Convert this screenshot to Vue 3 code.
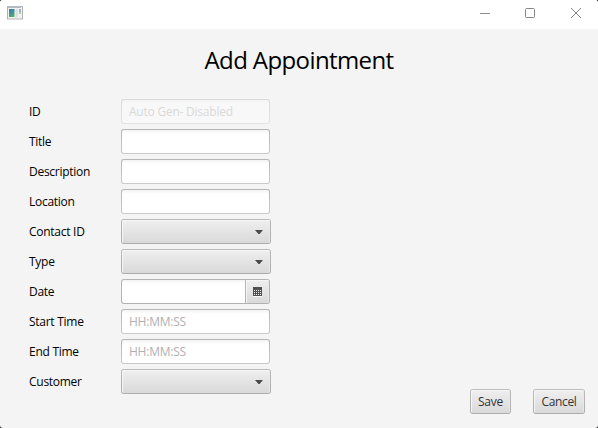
<script setup>
const rows = [
  { label: 'ID', kind: 'text', placeholder: 'Auto Gen- Disabled', disabled: true },
  { label: 'Title', kind: 'text' },
  { label: 'Description', kind: 'text' },
  { label: 'Location', kind: 'text' },
  { label: 'Contact ID', kind: 'combo' },
  { label: 'Type', kind: 'combo' },
  { label: 'Date', kind: 'date' },
  { label: 'Start Time', kind: 'text', placeholder: 'HH:MM:SS' },
  { label: 'End Time', kind: 'text', placeholder: 'HH:MM:SS' },
  { label: 'Customer', kind: 'combo' }
]
const cols = [0, 1, 2, 3]
const lines = [0, 1, 2]
</script>

<template>
  <div class="backdrop">
    <div class="window">
      <header class="titlebar">
        <svg class="app-icon" width="16" height="14" viewBox="0 0 16 14">
          <defs>
            <linearGradient id="pane" x1="0" y1="0" x2="0.4" y2="1">
              <stop offset="0" stop-color="#3f76b5" />
              <stop offset="0.5" stop-color="#3f8f9a" />
              <stop offset="1" stop-color="#55aa6c" />
            </linearGradient>
          </defs>
          <rect x="0.5" y="0.5" width="15" height="12.5" fill="#f2f2f2" stroke="#b0b3b6" />
          <rect x="1" y="0" width="13" height="2" fill="#b4bac0" />
          <rect x="2" y="3" width="5.5" height="8" fill="url(#pane)" />
          <rect x="8.5" y="3" width="2.5" height="8" fill="#dedede" />
          <rect x="12" y="3" width="2" height="3" fill="#8fb8d0" />
          <rect x="12" y="6" width="2" height="2" fill="#a9d3a5" />
        </svg>
        <svg class="controls" width="102" height="12" viewBox="0 0 102 12">
          <path d="M0 6.5H10" stroke="#8b8b8b" fill="none" />
          <rect x="45.5" y="1.5" width="9" height="9" rx="1" stroke="#858585" fill="none" />
          <path d="M91 1L101 11M101 1L91 11" stroke="#858585" fill="none" />
        </svg>
      </header>
      <h1>Add Appointment</h1>
      <main class="form">
        <div v-for="row in rows" :key="row.label" class="row">
          <label>{{ row.label }}</label>
          <div v-if="row.kind === 'text'" class="field" :class="{ disabled: row.disabled }">
            <div class="inner">{{ row.placeholder }}</div>
          </div>
          <div v-else-if="row.kind === 'combo'" class="combo">
            <div class="face">
              <svg width="8" height="4" viewBox="0 0 8 4"><path d="M0 0H8L4.6 4H3.4Z" fill="#4b4b4b" /></svg>
            </div>
          </div>
          <div v-else class="date">
            <div class="inner"></div>
            <div class="picker">
              <svg width="9" height="10" viewBox="0 0 9 10" shape-rendering="crispEdges">
                <rect width="9" height="9" fill="#505050" />
                <template v-for="y in lines" :key="y">
                  <rect v-for="x in cols" :key="x" :x="1 + x * 2" :y="3 + y * 2" width="1" height="1" fill="#f2f2f2" />
                </template>
                <rect y="9" width="9" height="1" fill="#fafafa" />
              </svg>
            </div>
          </div>
        </div>
      </main>
      <footer>
        <button class="save"><span>Save</span></button>
        <button class="cancel"><span>Cancel</span></button>
      </footer>
    </div>
  </div>
</template>

<style>
body { margin: 0; }
</style>

<style scoped>
* { box-sizing: border-box; }
.backdrop { width: 598px; height: 428px; background: #333; }
.window {
  width: 598px; height: 428px; background: #f4f4f4; border-radius: 3px;
  overflow: hidden; display: flex; flex-direction: column;
  font-family: "Open Sans", "Noto Sans", sans-serif; font-size: 12px; color: #000;
}
.titlebar {
  height: 29px; flex: none; background: #fff; display: flex; align-items: flex-start;
  justify-content: space-between; padding: 6px 16px 0 7px;
}
.controls { margin-top: 1px; }
h1 {
  margin: 13px 0 0; height: 36px; line-height: 36px; font-size: 24px; font-weight: 400;
  text-align: center; color: #000; letter-spacing: -0.6px;
}
.form {
  display: flex; flex-direction: column; gap: 5px; padding: 21px 0 0 29px;
  height: 316px; flex: none; margin-bottom: -40px;
}
.row { display: flex; height: 25px; }
label { width: 92px; line-height: 26px; letter-spacing: -0.27px; white-space: nowrap; }
.field {
  width: 149px; height: 25px; border-radius: 3px; padding: 1px;
  background: linear-gradient(#b3b6b6, #cbcbcb);
}
.inner {
  height: 23px; border-radius: 2px; background: linear-gradient(#f3f3f3, #fff 4px);
  padding-left: 7px; line-height: 24px; color: #b0b0b0; white-space: nowrap; letter-spacing: -0.23px;
}
.disabled { opacity: 0.4; }
.combo {
  width: 150px; height: 25px; padding: 1px; border-radius: 3px;
  background: linear-gradient(#b9b9b9, #acacac);
}
.face, .picker, button span {
  background: linear-gradient(#efefef, #d9d9d9);
  box-shadow: inset 1px 1px 0 #f6f6f6, inset -1px 0 0 #e8e8e8;
}
.face {
  height: 23px; border-radius: 2px; display: flex; align-items: center;
  justify-content: flex-end; padding-right: 7px;
}
.date {
  width: 149px; height: 25px; padding: 1px; border-radius: 3px; display: flex; gap: 1px;
  background: linear-gradient(#b3b6b6, #b2b2b2);
}
.date .inner { flex: 1; border-radius: 2px 0 0 2px; }
.picker { width: 23px; height: 23px; border-radius: 0 2px 2px 0; padding: 7px 0 0 7px; }
.picker svg { display: block; }
footer {
  display: flex; justify-content: flex-end; gap: 22px; margin-top: auto;
  padding: 0 13px 14px 0; position: relative;
}
button {
  height: 25px; padding: 1px; border: 0; border-radius: 3px; font: inherit; color: #333;
  background: linear-gradient(#bdbdbd, #acacac);
}
button span { display: block; height: 23px; line-height: 24px; border-radius: 2px; text-align: center; }
.save { width: 41px; letter-spacing: -0.2px; }
.cancel { width: 52px; letter-spacing: -0.35px; }
</style>
